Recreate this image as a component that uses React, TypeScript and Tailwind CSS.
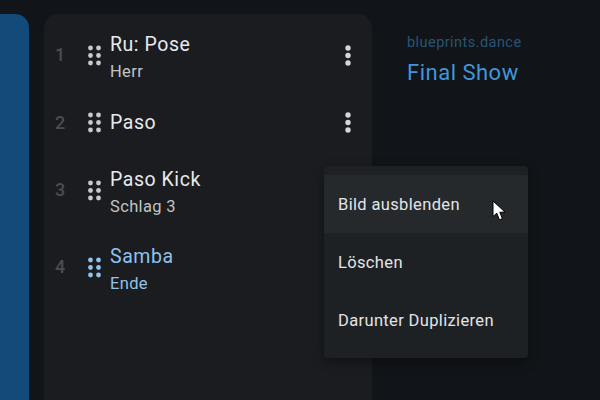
const rows = [
    { n: 1, title: "Ru: Pose", sub: "Herr", menu: true },
    { n: 2, title: "Paso", menu: true },
    { n: 3, title: "Paso Kick", sub: "Schlag 3" },
    { n: 4, title: "Samba", sub: "Ende", active: true },
]

const menuItems = ["Bild ausblenden", "Löschen", "Darunter Duplizieren"]

function Grip({ className }: { className: string }) {
    return <svg viewBox="0 0 13 21" className={`w-[13px] h-[21px] fill-current ${className}`}>
        <circle cx="2.5" cy="3" r="2.4" />
        <circle cx="10.5" cy="3" r="2.4" />
        <circle cx="2.5" cy="10.5" r="2.4" />
        <circle cx="10.5" cy="10.5" r="2.4" />
        <circle cx="2.5" cy="18" r="2.4" />
        <circle cx="10.5" cy="18" r="2.4" />
    </svg>
}

function Kebab() {
    return <svg viewBox="0 0 6 21" className="w-[6px] h-[21px] fill-[#d5d6da]">
        <circle cx="3" cy="3" r="2.7" />
        <circle cx="3" cy="10.5" r="2.7" />
        <circle cx="3" cy="18" r="2.7" />
    </svg>
}

function App() {
    return <div className="relative w-[600px] h-[400px] overflow-hidden bg-[#111418] flex pt-[14px] font-['Roboto',sans-serif]">
        <div className="w-[29px] bg-[#124a79] rounded-tr-[14px]" />
        <div className="ml-[15px] w-[328px] bg-[#1a1c1f] rounded-t-[14px] pt-[5px]">
            {rows.map(row => <div key={row.n} className={`flex items-center pl-[11px] pr-[21px] pb-[5px] ${row.sub ? "h-[77px]" : "h-[58px]"}`}>
                <span className="w-[33px] -mt-[1px] text-[18px] font-medium text-[#4b4d51]">{row.n}</span>
                <Grip className={row.active ? "text-[#90c2ea]" : "text-[#c9cace]"} />
                <div className={`ml-[9px] flex-1 ${row.sub ? "pt-[6px]" : ""} ${row.active ? "text-[#90c2ea]" : ""}`}>
                    <div className={`text-[19.5px] leading-[27px] tracking-[0.55px] ${row.active ? "" : "text-[#e8e9ec]"}`}>{row.title}</div>
                    {row.sub && <div className={`text-[16.5px] leading-[27px] tracking-[0.35px] ${row.active ? "" : "text-[#c2c3c7]"}`}>{row.sub}</div>}
                </div>
                {row.menu && <Kebab />}
            </div>)}
        </div>
        <div className="ml-[35px] pt-[19px]">
            <div className="text-[14.5px] leading-[20px] tracking-[0.45px] text-[#295475]">blueprints.dance</div>
            <div className="mt-[5px] text-[22px] leading-[30px] tracking-[0.5px] text-[#4296d8]">Final Show</div>
        </div>
        <div className="absolute left-[324px] top-[166px] w-[204px] h-[192px] pt-[9px] rounded-[4px] bg-[#1e2124] shadow-[0_4px_12px_rgba(0,0,0,0.35)]">
            {menuItems.map((item, i) => <div key={item} className={`h-[58px] flex items-center px-[14px] pt-[2px] text-[16.5px] tracking-[0.35px] text-[#e3e4e7] ${i === 0 ? "bg-[#26292c]" : ""}`}>
                {item}
            </div>)}
        </div>
        <svg viewBox="0 0 15 22" className="absolute left-[492px] top-[200px] w-[15px] h-[22px]">
            <path d="M1 1 L1 16.5 L4.8 13.2 L7.4 19.8 L10.4 18.6 L7.8 12.3 L13 12 Z" fill="#fff" stroke="#000" strokeWidth="1" />
        </svg>
    </div>
}

export default App
